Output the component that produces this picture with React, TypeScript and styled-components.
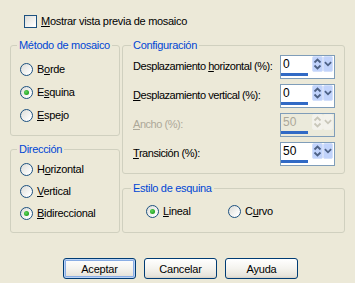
import styled, { createGlobalStyle } from 'styled-components';

const GlobalStyle = createGlobalStyle`
  html, body {
    margin: 0;
    padding: 0;
    background: #ece9d8;
  }
  body {
    font-family: Tahoma, 'Liberation Sans', Arial, sans-serif;
    font-size: 11px;
    letter-spacing: -0.3px;
    color: #000;
  }
`;

const Dialog = styled.div`
  width: 355px;
  height: 283px;
  box-sizing: border-box;
  padding-top: 15px;
  background: #ece9d8;
  display: flex;
  flex-direction: column;
  white-space: nowrap;
`;

const CheckRow = styled.label`
  display: flex;
  align-items: center;
  gap: 4px;
  height: 13px;
  padding-left: 24px;
  line-height: 13px;
`;

const CheckBox = styled.span`
  width: 13px;
  height: 13px;
  box-sizing: border-box;
  border: 1px solid #1c5180;
  background: linear-gradient(135deg, #dcdcd7 0%, #ffffff 90%);
`;

const Columns = styled.div`
  display: flex;
  gap: 2px;
  margin-top: 11px;
  padding-left: 10px;
`;

const Column = styled.div<{ $width: number; $gap: number }>`
  display: flex;
  flex-direction: column;
  width: ${(p) => p.$width}px;
  gap: ${(p) => p.$gap}px;
`;

const Group = styled.fieldset<{ $pad: string }>`
  margin: 0;
  min-width: 0;
  padding: ${(p) => p.$pad};
  border: 1px solid #d0d0bf;
  border-radius: 3px;
`;

const Legend = styled.legend`
  padding: 0 2px;
  margin-left: -2px;
  color: #0046d5;
  line-height: 13px;
  height: 13px;
  white-space: nowrap;
`;

const RadioList = styled.div<{ $row: number }>`
  display: flex;
  flex-direction: column;
  padding-left: 1px;

  & > label {
    height: ${(p) => p.$row}px;
  }
`;

const RadioInline = styled.div`
  display: flex;
  padding-left: 13px;

  & > label {
    width: 82px;
    height: 22px;
  }
`;

const RadioLabel = styled.label`
  display: flex;
  align-items: center;
  gap: 4px;
  line-height: 13px;
`;

const RadioCircle = styled.span<{ $checked?: boolean }>`
  position: relative;
  flex: none;
  width: 13px;
  height: 13px;
  box-sizing: border-box;
  border: 1px solid #1c5180;
  border-radius: 50%;
  background: linear-gradient(135deg, #dcdcd7 0%, #ffffff 85%);

  &::after {
    content: '';
    display: ${(p) => (p.$checked ? 'block' : 'none')};
    position: absolute;
    left: 3px;
    top: 3px;
    width: 5px;
    height: 5px;
    border-radius: 50%;
    background: radial-gradient(circle at 40% 40%, #62d85e 0%, #21a121 70%);
  }
`;

const FieldRows = styled.div`
  display: flex;
  flex-direction: column;
  gap: 5px;
`;

const FieldRow = styled.div<{ $disabled?: boolean }>`
  display: flex;
  align-items: center;
  justify-content: space-between;
  height: 24px;
  color: ${(p) => (p.$disabled ? '#aca899' : '#000')};
`;

const FieldLabel = styled.span`
  padding-bottom: 3px;
  white-space: nowrap;
  letter-spacing: -0.45px;
`;

const SpinBox = styled.div<{ $disabled?: boolean }>`
  flex: none;
  width: 55px;
  height: 24px;
  box-sizing: border-box;
  border: 1px solid #7f9db9;
  background: ${(p) => (p.$disabled ? '#ebeadb' : '#ffffff')};
  display: flex;
  flex-direction: column;
`;

const SpinTop = styled.div`
  display: flex;
  height: 16px;
  padding-right: 1px;
`;

const SpinValue = styled.span<{ $disabled?: boolean }>`
  flex: 1;
  padding-left: 2px;
  font-size: 12px;
  letter-spacing: 0;
  line-height: 16px;
  color: ${(p) => (p.$disabled ? '#aca899' : '#000')};
`;

const SpinButton = styled.span<{ $w: number; $disabled?: boolean }>`
  width: ${(p) => p.$w}px;
  height: 16px;
  box-sizing: border-box;
  border: 1px solid ${(p) => (p.$disabled ? '#f2f1ea' : '#d4e0fb')};
  border-radius: 2px;
  background: ${(p) => (p.$disabled ? '#f3f2ec' : '#c1d3fb')};
  color: ${(p) => (p.$disabled ? '#c9c7ba' : '#4d6185')};
  display: flex;
  align-items: center;
  justify-content: center;
`;

const SpinBar = styled.span`
  display: block;
  width: 27px;
  height: 3px;
  margin-top: 1px;
  background: #316ac5;
`;

const Buttons = styled.div`
  display: flex;
  gap: 8px;
  margin-top: 25px;
  padding-left: 63px;
`;

const Button = styled.button<{ $default?: boolean }>`
  width: 73px;
  height: 21px;
  padding: 0;
  border: 1px solid #003c74;
  border-radius: 3px;
  background: linear-gradient(180deg, #ffffff 0%, #f4f3ee 50%, #e6e3da 90%, #d6d0c5 100%);
  box-shadow: ${(p) => (p.$default ? 'inset 0 0 0 1px #bcd4f6, inset 0 0 0 2px #89ade4' : 'none')};
  font-family: Tahoma, 'Liberation Sans', Arial, sans-serif;
  font-size: 11px;
  letter-spacing: -0.2px;
  color: #000;
`;

const Underline = styled.u`
  text-decoration: underline;
  text-underline-offset: 1px;
`;

type SpinProps = { value: string; disabled?: boolean };

const Spin = ({ value, disabled }: SpinProps) => (
  <SpinBox $disabled={disabled}>
    <SpinTop>
      <SpinValue $disabled={disabled}>{value}</SpinValue>
      <SpinButton $w={11} $disabled={disabled}>
        <svg width="9" height="14" viewBox="0 0 9 14">
          <path d="M1.5 5.5 L4.5 2.5 L7.5 5.5" fill="none" stroke="currentColor" strokeWidth="1.8" />
          <path d="M1.5 8.5 L4.5 11.5 L7.5 8.5" fill="none" stroke="currentColor" strokeWidth="1.8" />
        </svg>
      </SpinButton>
      <SpinButton $w={10} $disabled={disabled}>
        <svg width="9" height="14" viewBox="0 0 9 14">
          <path d="M1 5 L4.5 8.5 L8 5" fill="none" stroke="currentColor" strokeWidth="2" />
        </svg>
      </SpinButton>
    </SpinTop>
    <SpinBar />
  </SpinBox>
);

type RadioProps = { checked?: boolean; children: React.ReactNode };

const Radio = ({ checked, children }: RadioProps) => (
  <RadioLabel>
    <RadioCircle $checked={checked} />
    <span>{children}</span>
  </RadioLabel>
);

export default function App() {
  return (
    <>
      <GlobalStyle />
      <Dialog>
        <CheckRow>
          <CheckBox />
          <span>
            <Underline>M</Underline>ostrar vista previa de mosaico
          </span>
        </CheckRow>
        <Columns>
          <Column $width={110} $gap={7}>
            <Group $pad="6px 8px 8px 8px">
              <Legend>Método de mosaico</Legend>
              <RadioList $row={23}>
                <Radio>
                  B<Underline>o</Underline>rde
                </Radio>
                <Radio checked>
                  E<Underline>s</Underline>quina
                </Radio>
                <Radio>
                  <Underline>E</Underline>spejo
                </Radio>
              </RadioList>
            </Group>
            <Group $pad="2px 8px 8px 8px">
              <Legend>Dirección</Legend>
              <RadioList $row={22}>
                <Radio>
                  H<Underline>o</Underline>rizontal
                </Radio>
                <Radio>
                  <Underline>V</Underline>ertical
                </Radio>
                <Radio checked>
                  <Underline>B</Underline>idireccional
                </Radio>
              </RadioList>
            </Group>
          </Column>
          <Column $width={223} $gap={8}>
            <Group $pad="3px 9px 7px 10px">
              <Legend>Configuración</Legend>
              <FieldRows>
                <FieldRow>
                  <FieldLabel>
                    Desplazamiento <Underline>h</Underline>orizontal (%):
                  </FieldLabel>
                  <Spin value="0" />
                </FieldRow>
                <FieldRow>
                  <FieldLabel>
                    <Underline>D</Underline>esplazamiento vertical (%):
                  </FieldLabel>
                  <Spin value="0" />
                </FieldRow>
                <FieldRow $disabled>
                  <FieldLabel>
                    <Underline>A</Underline>ncho (%):
                  </FieldLabel>
                  <Spin value="50" disabled />
                </FieldRow>
                <FieldRow>
                  <FieldLabel>
                    <Underline>T</Underline>ransición (%):
                  </FieldLabel>
                  <Spin value="50" />
                </FieldRow>
              </FieldRows>
            </Group>
            <Group $pad="5px 9px 10px 10px">
              <Legend>Estilo de esquina</Legend>
              <RadioInline>
                <Radio checked>
                  <Underline>L</Underline>ineal
                </Radio>
                <Radio>
                  C<Underline>u</Underline>rvo
                </Radio>
              </RadioInline>
            </Group>
          </Column>
        </Columns>
        <Buttons>
          <Button $default>Aceptar</Button>
          <Button>Cancelar</Button>
          <Button>Ayuda</Button>
        </Buttons>
      </Dialog>
    </>
  );
}
